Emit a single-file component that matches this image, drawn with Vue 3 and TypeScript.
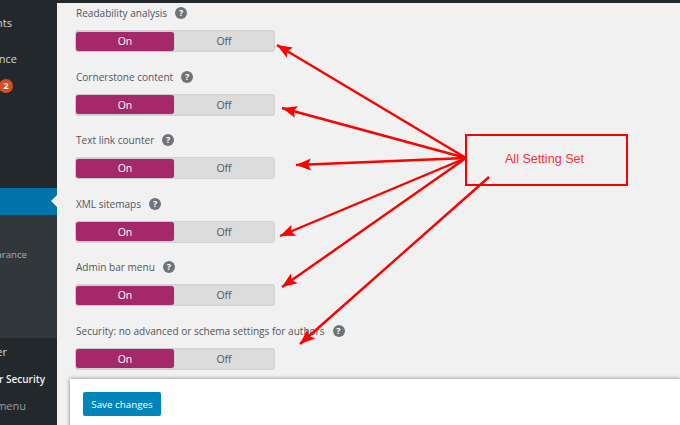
<script setup lang="ts">
import { computed } from 'vue'

interface Field { label: string }
const fields: Field[] = [
  { label: 'Readability analysis' },
  { label: 'Cornerstone content' },
  { label: 'Text link counter' },
  { label: 'XML sitemaps' },
  { label: 'Admin bar menu' },
  { label: 'Security: no advanced or schema settings for authors' },
]

interface Arrow { x1: number; y1: number; x2: number; y2: number }
const arrows: Arrow[] = [
  { x1: 466, y1: 158, x2: 277, y2: 45 },
  { x1: 466, y1: 158, x2: 282, y2: 108 },
  { x1: 466, y1: 158, x2: 296, y2: 165 },
  { x1: 466, y1: 158, x2: 280, y2: 236 },
  { x1: 466, y1: 158, x2: 282, y2: 287 },
  { x1: 489, y1: 177, x2: 300, y2: 344 },
]

const heads = computed(() =>
  arrows.map((a) => {
    const dx = a.x1 - a.x2
    const dy = a.y1 - a.y2
    const len = Math.hypot(dx, dy)
    const ux = dx / len
    const uy = dy / len
    const bx = a.x2 + ux * 15
    const by = a.y2 + uy * 15
    const nx = a.x2 + ux * 12
    const ny = a.y2 + uy * 12
    return `${a.x2},${a.y2} ${bx - uy * 6},${by + ux * 6} ${nx},${ny} ${bx + uy * 6},${by - ux * 6}`
  }),
)
</script>

<template>
  <div class="screen">
    <div class="topbar"></div>
    <div class="layout">
      <nav class="sidebar">
        <div class="item comments">Comments</div>
        <div class="item appearance">Appearance</div>
        <div class="item plugins"><span class="badge">2</span></div>
        <div class="spacer"></div>
        <div class="item current"></div>
        <div class="submenu">
          <div class="item sub-appearance">Appearance</div>
        </div>
        <div class="item footer-one">Manager</div>
        <div class="item footer-two">Loginizer Security</div>
        <div class="item footer-three">Collapse menu</div>
      </nav>

      <main class="content">
        <section v-for="field in fields" :key="field.label" class="field">
          <div class="label-row">
            <span class="label">{{ field.label }}</span>
            <span class="help">?</span>
          </div>
          <div class="toggle">
            <span class="option on">On</span>
            <span class="option off">Off</span>
          </div>
        </section>
        <footer class="savebar">
          <button class="save" type="button">Save changes</button>
        </footer>
      </main>
    </div>

    <svg class="annotation" width="680" height="425" viewBox="0 0 680 425">
      <g v-for="(a, i) in arrows" :key="i">
        <line :x1="a.x1" :y1="a.y1" :x2="a.x2" :y2="a.y2" stroke="#ff0000" stroke-width="2.4" />
        <polygon :points="heads[i]" fill="#ff0000" />
      </g>
    </svg>
    <div class="note">All Setting Set</div>
  </div>
</template>

<style>
html, body { margin: 0; padding: 0; background: #f1f1f1; }
</style>

<style scoped>
.screen {
  position: relative;
  width: 680px;
  height: 425px;
  overflow: hidden;
  display: flex;
  flex-direction: column;
  background: #f1f1f1;
  font-family: "Open Sans", "Liberation Sans", sans-serif;
}
.topbar { height: 3px; flex: none; background: #23282d; }
.layout { flex: 1; display: flex; min-height: 0; }
.sidebar {
  width: 57px;
  flex: none;
  display: flex;
  flex-direction: column;
  background: #23282d;
  color: #d5d7d9;
  font-size: 11px;
  overflow: hidden;
}
.item {
  height: 27px;
  flex: none;
  display: flex;
  align-items: center;
  justify-content: flex-end;
  white-space: nowrap;
}
.comments { margin-top: 6px; padding-right: 45px; }
.appearance { margin-top: 9px; padding-right: 40px; }
.plugins { justify-content: flex-start; height: 20px; margin-top: 4px; }
.badge {
  width: 14px;
  height: 14px;
  margin-left: -1px;
  border-radius: 50%;
  background: #d54e21;
  color: #fff;
  font-size: 9px;
  font-weight: 700;
  line-height: 14px;
  text-align: center;
}
.spacer { height: 92px; flex: none; }
.current { position: relative; background: #0073aa; }
.current::after {
  content: "";
  position: absolute;
  right: 0;
  top: 7px;
  border: 6px solid transparent;
  border-left-width: 0;
  border-right-color: #f1f1f1;
}
.submenu { height: 123px; flex: none; background: #32373c; color: #a9acaf; padding-top: 26px; box-sizing: border-box; }
.sub-appearance { padding-right: 30px; font-size: 9.6px; }
.footer-one { padding-right: 50px; }
.footer-two { padding-right: 12px; color: #eef0f1; font-size: 10px; font-weight: 600; }
.footer-three { padding-right: 31px; color: #9a9da0; }

.content { position: relative; flex: 1; padding: 0.4px 0 0 18px; min-width: 0; }
.field { height: 63.5px; }
.label-row { display: flex; align-items: center; gap: 8px; height: 20px; }
.label { color: #50575c; font-size: 10.05px; margin-left: 1px; }
.help {
  width: 12px;
  height: 12px;
  border-radius: 50%;
  background: #6f7479;
  color: #fff;
  font-size: 9px;
  font-weight: 700;
  line-height: 12px;
  text-align: center;
}
.toggle {
  width: 200px;
  height: 22px;
  margin-top: 7px;
  box-sizing: border-box;
  padding: 1.5px 1px;
  display: flex;
  background: #dcdcdc;
  border-radius: 4px;
  box-shadow: inset 0 0 2px #b5b5b5;
  font-size: 10.5px;
}
.option { display: flex; align-items: center; justify-content: center; }
.on { width: 98px; background: #a4286a; color: #fff; border-radius: 3px; box-shadow: 0 0 1px #777; }
.off { flex: 1; color: #555; }
.savebar {
  position: absolute;
  left: 13px;
  right: 0;
  top: 376px;
  height: 60px;
  padding: 13px;
  box-sizing: border-box;
  background: #fff;
  box-shadow: 0 0 4px rgba(0, 0, 0, 0.5);
}
.save {
  display: block;
  width: 78px;
  height: 24px;
  padding: 0;
  border: 0;
  border-radius: 2px;
  background: #0085ba;
  color: #fff;
  font: 9.8px "Open Sans", "Liberation Sans", sans-serif;
}
.annotation { position: absolute; left: 0; top: 0; pointer-events: none; }
.note {
  position: absolute;
  left: 465px;
  top: 134px;
  width: 163px;
  height: 52px;
  box-sizing: border-box;
  border: 2px solid #ff0000;
  padding: 0 4px 2px 0;
  display: flex;
  align-items: center;
  justify-content: center;
  color: #f5323c;
  font: 12.6px "Liberation Sans", Arial, sans-serif;
}
</style>
